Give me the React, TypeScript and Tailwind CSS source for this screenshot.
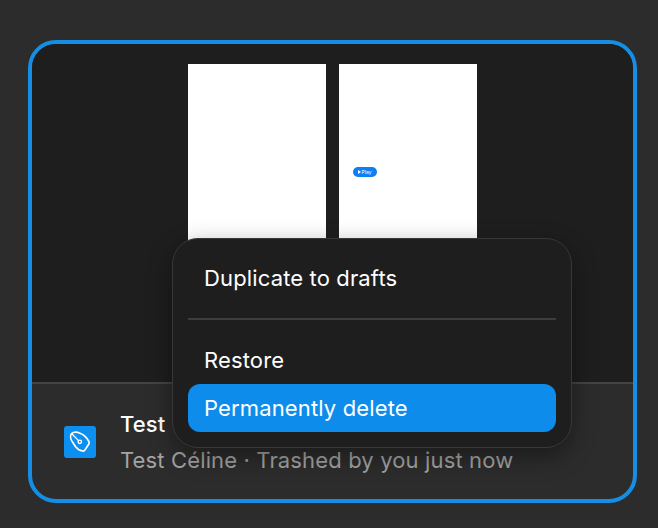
import React from 'react'

function PenIcon() {
  return (
    <svg viewBox="0 0 32 32" className="h-8 w-8" fill="none">
      <rect width="32" height="32" rx="3" fill="#0d8fef" />
      <path
        d="M7.6 7.6 C9.6 5.8 13 6 16 7.2 C19.5 8.6 23 11.5 25 15.6 C25.4 16.4 25.3 17.2 24.8 18 L21.2 23.6 C20.6 24.6 19.6 25.2 18.6 25 C15.6 24.4 13.2 22.8 11.4 20.4 L8.8 16.6 C6.6 13.4 5.8 9.4 7.6 7.6 Z"
        stroke="white"
        strokeWidth="1.7"
        strokeLinejoin="round"
      />
      <path d="M8 8 L14.6 14.6" stroke="white" strokeWidth="1.3" />
      <circle cx="15.8" cy="15.8" r="1.7" stroke="white" strokeWidth="1.4" />
    </svg>
  )
}

export default function App() {
  return (
    <div className="h-[528px] w-[658px] overflow-hidden bg-[#2c2c2c] pl-[28px] pt-[40px] font-['Inter',sans-serif]">
      <div className="relative flex h-[463px] w-[609px] flex-col overflow-hidden rounded-[28px] border-4 border-[#158fe6] bg-[#2c2c2c]">
        {/* Preview */}
        <div className="flex h-[338px] shrink-0 justify-center gap-[13px] overflow-hidden bg-[#1e1e1e] pr-[1px] pt-[20px]">
          <div className="h-[200px] w-[138px] bg-white" />
          <div className="relative h-[200px] w-[138px] bg-white">
            <div className="absolute left-[14px] top-[103px] flex h-[10px] w-[24px] items-center justify-center gap-[1px] rounded-full bg-[#0d7ff0] text-[5px] leading-none text-white">
              <span className="h-0 w-0 border-y-[2px] border-l-[3px] border-y-transparent border-l-white" />
              <span>Play</span>
            </div>
          </div>
        </div>

        {/* Footer */}
        <div className="flex flex-1 items-center gap-[24px] border-t-2 border-[#444444] pl-[32px]">
          <PenIcon />
          <div className="flex flex-col gap-[10px]">
            <div className="text-[22px] leading-[26px] font-medium tracking-[0.14px] text-white">Test</div>
            <div className="text-[22px] leading-[26px] tracking-[0.14px] text-[#a3a3a3]">
              Test Céline · Trashed by you just now
            </div>
          </div>
        </div>

        {/* Context menu */}
        <div className="absolute left-[140px] top-[194px] h-[210px] w-[400px] rounded-[26px] border border-[#383838] bg-[#1e1e1e] px-[15px] shadow-[0_8px_24px_rgba(0,0,0,0.4)]">
          <div className="flex h-[79px] items-center pl-[16px] text-[22px] tracking-[0.14px] text-white">
            Duplicate to drafts
          </div>
          <div className="h-[2px] bg-[#3d3d3d]" />
          <div className="flex h-[64px] items-end pb-[7px] pl-[16px] text-[22px] tracking-[0.14px] text-white">
            Restore
          </div>
          <div className="flex h-[48px] items-center rounded-[12px] bg-[#0d8cec] pl-[16px] text-[22px] tracking-[0.14px] text-white">
            Permanently delete
          </div>
        </div>
      </div>
    </div>
  )
}
